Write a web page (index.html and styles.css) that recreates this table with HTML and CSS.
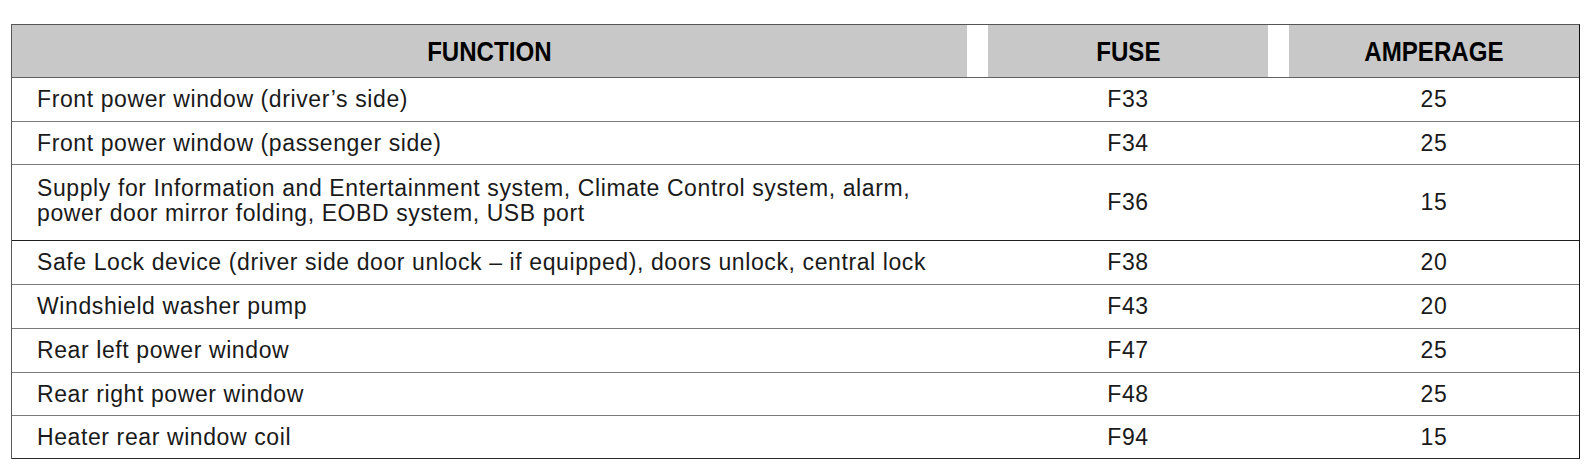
FILE: index.html
```html
<!DOCTYPE html>
<html lang="en">
<head>
<meta charset="utf-8">
<title>Fuses</title>
<link rel="stylesheet" href="styles.css">
</head>
<body>
<div class="fuse-table">
  <div class="row head">
    <div class="cell"><span class="label">FUNCTION</span></div>
    <div class="cell"><span class="label">FUSE</span></div>
    <div class="cell"><span class="label">AMPERAGE</span></div>
  </div>
  <div class="row">
    <div class="cell fn">Front power window (driver’s side)</div>
    <div class="cell num">F33</div>
    <div class="cell num">25</div>
  </div>
  <div class="row short">
    <div class="cell fn">Front power window (passenger side)</div>
    <div class="cell num">F34</div>
    <div class="cell num">25</div>
  </div>
  <div class="row tall dark">
    <div class="cell fn">Supply for Information and Entertainment system, Climate Control system, alarm,<br>power door mirror folding, EOBD system, USB port</div>
    <div class="cell num">F36</div>
    <div class="cell num">15</div>
  </div>
  <div class="row">
    <div class="cell fn">Safe Lock device (driver side door unlock – if equipped), doors unlock, central lock</div>
    <div class="cell num">F38</div>
    <div class="cell num">20</div>
  </div>
  <div class="row">
    <div class="cell fn">Windshield washer pump</div>
    <div class="cell num">F43</div>
    <div class="cell num">20</div>
  </div>
  <div class="row">
    <div class="cell fn">Rear left power window</div>
    <div class="cell num">F47</div>
    <div class="cell num">25</div>
  </div>
  <div class="row short">
    <div class="cell fn">Rear right power window</div>
    <div class="cell num">F48</div>
    <div class="cell num">25</div>
  </div>
  <div class="row short last">
    <div class="cell fn">Heater rear window coil</div>
    <div class="cell num">F94</div>
    <div class="cell num">15</div>
  </div>
</div>
</body>
</html>
```

FILE: styles.css
```css
html, body {
  margin: 0;
  padding: 0;
  background: #ffffff;
}

body {
  padding: 24px 0 0 11px;
  font-family: "Liberation Sans", Arial, sans-serif;
  color: #1a1a1a;
}

.fuse-table {
  width: 1569px;
  border-left: 1px solid #5a5a5a;
  border-right: 1px solid #111111;
  border-top: 1px solid #555555;
  box-sizing: border-box;
}

.row {
  display: grid;
  grid-template-columns: 955px 280px 1fr;
  column-gap: 21px;
  height: 44px;
  border-bottom: 1px solid #7a7a7a;
  box-sizing: border-box;
  align-items: center;
}

.row.short {
  height: 43px;
}

.row.head {
  height: 53px;
  border-bottom: 1px solid #626262;
  align-items: stretch;
}

.row.tall {
  height: 76px;
}

.row.dark {
  border-bottom-color: #1e1e1e;
}

.row.last {
  border-bottom-color: #2a2a2a;
}

.head .cell {
  background: #c8c8c8;
  display: flex;
  align-items: center;
  justify-content: center;
  padding-top: 2px;
}

.head .label {
  display: inline-block;
  font-family: "Liberation Sans", Arial, sans-serif;
  font-weight: 700;
  font-size: 28px;
  color: #000000;
  transform: scaleX(0.86);
}

.cell.fn {
  padding-left: 25px;
  font-size: 23px;
  letter-spacing: 0.6px;
  line-height: 25px;
}

.row.tall .cell.fn {
  padding-bottom: 4px;
}

.cell.num {
  text-align: center;
  font-size: 23px;
  letter-spacing: 0.6px;
}
```
